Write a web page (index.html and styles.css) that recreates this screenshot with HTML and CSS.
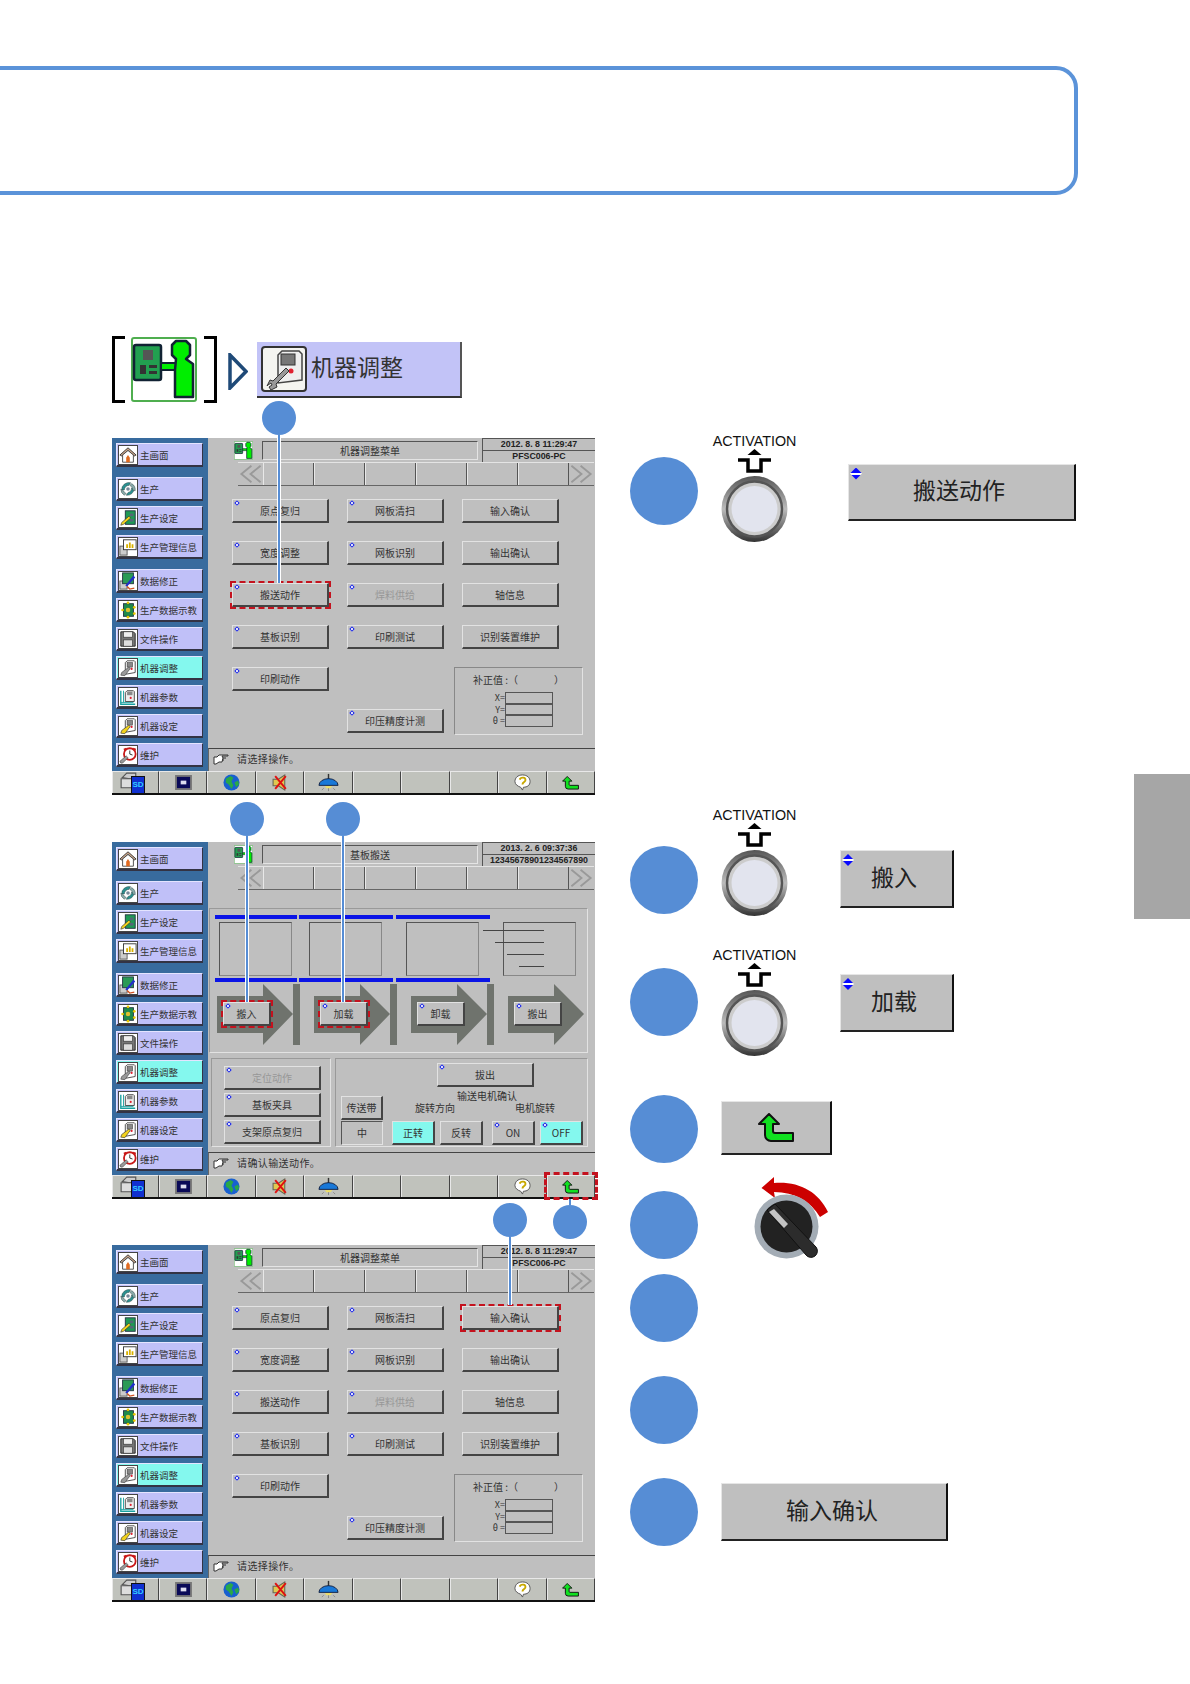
FILE: index.html
```html
<!DOCTYPE html>
<html lang="zh-CN">
<head>
    <meta charset="UTF-8">
    <title>机器调整</title>
    <link rel="stylesheet" href="styles.css">
</head>
<body>
    <!-- icon sheet -->
    <svg class="icon-sheet" width="0" height="0">
        <symbol id="i-person" viewBox="0 0 66 65">
            <rect x="1" y="1" width="64" height="63" rx="2" fill="#fff" stroke="#4fae4f" stroke-width="2"/>
            <rect x="3" y="8" width="27" height="35" rx="2" fill="#22a050" stroke="#123" stroke-width="2.5"/>
            <rect x="12" y="13" width="10" height="10" fill="#555"/>
            <rect x="9" y="28" width="6" height="9" fill="#333"/>
            <rect x="18" y="28" width="8" height="3" fill="#333"/>
            <rect x="18" y="34" width="8" height="3" fill="#333"/>
            <path d="M30 26h16v7H30z" fill="#0e0" stroke="#123" stroke-width="2"/>
            <path d="M45 4h10l4 4v10l-4 4 7 5v33H44V33l1-11-4-4V8z" fill="#0e0" stroke="#123" stroke-width="2.5" stroke-linejoin="round"/>
        </symbol>
        <symbol id="i-machine" viewBox="0 0 46 46">
            <rect x="1" y="1" width="44" height="44" rx="3" fill="#f4f4f0" stroke="#333" stroke-width="2"/>
            <path d="M17 9l4-4h17l3 3v26l-24 3z" fill="#eee" stroke="#444" stroke-width="1.5"/>
            <rect x="20" y="8" width="14" height="11" fill="#777" stroke="#333"/>
            <circle cx="30" cy="25" r="2.5" fill="#e02030"/>
            <path d="M6 40l3-6 3 1 13-13 3 3-13 13 1 3-6 3-2-3 3-2-1-2-3 2z" fill="#999" stroke="#333"/>
        </symbol>
        <symbol id="i-home" viewBox="0 0 20 20">
            <path d="M1 10l9-8 9 8-2 1-7-6-7 6z" fill="#c9a58a" stroke="#333"/>
            <path d="M4 10v8h12v-8l-6-5z" fill="#fff" stroke="#444"/>
            <path d="M8 18v-5l2-3 2 3v5z" fill="#e06a20"/>
        </symbol>
        <symbol id="i-swirl" viewBox="0 0 20 20">
            <circle cx="10" cy="10" r="2" fill="#789"/>
            <path d="M3 11a8 8 0 0 1 10-8l-2 3a5 5 0 0 0-5 5z" fill="#2a8f8f" stroke="#344" stroke-width=".5"/>
            <path d="M17 9a8 8 0 0 1-9 8l2-3a5 5 0 0 0 4-5z" fill="#2a8f8f" stroke="#344" stroke-width=".5"/>
            <path d="M14 4a8 8 0 0 1 4 8l-3-1a5 5 0 0 0-3-5z" fill="#8aa" stroke="#344" stroke-width=".5"/>
            <path d="M6 17a8 8 0 0 1-4-7l3 2a5 5 0 0 0 3 3z" fill="#8aa" stroke="#344" stroke-width=".5"/>
        </symbol>
        <symbol id="i-set" viewBox="0 0 20 20">
            <rect x="7" y="2" width="11" height="15" fill="#1f9a55" stroke="#234"/>
            <rect x="12" y="5" width="4" height="3" fill="#567"/>
            <rect x="12" y="11" width="4" height="3" fill="#567"/>
            <path d="M2 18l1-3 8-7 2 2-8 7z" fill="#f2d21c" stroke="#333" stroke-width=".7"/>
        </symbol>
        <symbol id="i-info" viewBox="0 0 20 20">
            <rect x="1" y="9" width="8" height="10" fill="#ccc" stroke="#555"/>
            <rect x="5" y="2" width="14" height="11" fill="#fff" stroke="#333"/>
            <path d="M8 11V7h2v4zM11 11V5h2v6zM14 11V7h2v4z" fill="#d8b000"/>
        </symbol>
        <symbol id="i-fix" viewBox="0 0 20 20">
            <rect x="1" y="10" width="8" height="9" fill="#ccc" stroke="#555"/>
            <rect x="4" y="1" width="12" height="12" fill="#2a9a55" stroke="#234"/>
            <path d="M7 15l9-11 2 2-9 10z" fill="#2030c8"/>
            <path d="M9 16l3 3 5-1" fill="none" stroke="#d05020" stroke-width="1.5"/>
        </symbol>
        <symbol id="i-teach" viewBox="0 0 20 20">
            <rect x="5" y="3" width="11" height="14" fill="#1f8a4a" stroke="#234"/>
            <circle cx="4" cy="10" r="1.5" fill="#e8c800"/>
            <circle cx="10" cy="2" r="1.5" fill="#e8c800"/>
            <circle cx="17" cy="7" r="1.5" fill="#e8c800"/>
            <circle cx="17" cy="14" r="1.5" fill="#e8c800"/>
            <circle cx="10" cy="18" r="1.5" fill="#e8c800"/>
            <circle cx="10" cy="10" r="2.5" fill="#dcc030"/>
        </symbol>
        <symbol id="i-disk" viewBox="0 0 20 20">
            <path d="M2 2h14l2 2v14H2z" fill="#777" stroke="#222"/>
            <rect x="5" y="2" width="10" height="6" fill="#eee" stroke="#333" stroke-width=".7"/>
            <rect x="5" y="11" width="10" height="7" fill="#ddd" stroke="#333" stroke-width=".7"/>
        </symbol>
        <symbol id="i-adjust" viewBox="0 0 20 20">
            <path d="M7 4l2-2h8l1 1v12l-11 2z" fill="#fff" stroke="#444"/>
            <rect x="9" y="4" width="6" height="5" fill="#888" stroke="#333" stroke-width=".6"/>
            <circle cx="14" cy="11" r="1.2" fill="#e02030"/>
            <path d="M2 18l1-3 8-6 1.5 1.5-6 8z" fill="#999" stroke="#444" stroke-width=".7"/>
        </symbol>
        <symbol id="i-param" viewBox="0 0 20 20">
            <path d="M2 3v15h16" fill="none" stroke="#18a0a0" stroke-width="1.5"/>
            <path d="M5 3v13M2 16h14" fill="none" stroke="#18a0a0"/>
            <path d="M7 5l2-2h7l1 1v11H7z" fill="#eee" stroke="#444"/>
            <rect x="9" y="4" width="6" height="4" fill="#888"/>
            <circle cx="13" cy="11" r="1.2" fill="#e02030"/>
        </symbol>
        <symbol id="i-mset" viewBox="0 0 20 20">
            <path d="M7 4l2-2h8l1 1v12l-11 2z" fill="#fff" stroke="#444"/>
            <rect x="9" y="4" width="6" height="5" fill="#888" stroke="#333" stroke-width=".6"/>
            <circle cx="14" cy="11" r="1.2" fill="#e02030"/>
            <path d="M2 18l1-3 8-6 1.5 1.5-6 8z" fill="#f2d21c" stroke="#333" stroke-width=".7"/>
        </symbol>
        <symbol id="i-clock" viewBox="0 0 20 20">
            <circle cx="12" cy="9" r="6.5" fill="#fff" stroke="#c81818" stroke-width="2"/>
            <path d="M12 5v4l3 1" fill="none" stroke="#222"/>
            <path d="M5 3l3-1 1 2-3 2zM19 3l-3-1-1 2 3 2z" fill="#c81818"/>
            <path d="M2 19l-1-2 7-6 2 2-6 6z" fill="#999" stroke="#444" stroke-width=".7"/>
        </symbol>
        <symbol id="i-printer" viewBox="0 0 16 16">
            <path d="M2 5l4-4h8v6z" fill="#ccc" stroke="#555"/>
            <path d="M1 6h13v8H1z" fill="#ddd" stroke="#555"/>
        </symbol>
        <symbol id="i-screen" viewBox="0 0 18 16">
            <rect x="1" y="1" width="16" height="14" fill="#0a0a58" stroke="#777" stroke-width="2"/>
            <rect x="6" y="6" width="6" height="4" fill="#dde"/>
        </symbol>
        <symbol id="i-globe" viewBox="0 0 18 18">
            <circle cx="9" cy="9" r="8.5" fill="#1860d0"/>
            <path d="M3 5l5-3 3 2-2 4 2 4-2 4-3-5-3-2zM12 9l4-2 1 4-3 3z" fill="#28a848"/>
        </symbol>
        <symbol id="i-mute" viewBox="0 0 16 16">
            <path d="M1 5h5l6-4v14l-6-4H1z" fill="#e0c850" stroke="#665"/>
            <path d="M3 2l10 12M13 2L3 14" stroke="#e01010" stroke-width="1.8"/>
        </symbol>
        <symbol id="i-lamp" viewBox="0 0 22 18">
            <path d="M11 0v6" stroke="#333" stroke-width="1.5"/>
            <path d="M1 12a10 7 0 0 1 20 0z" fill="#1878d8" stroke="#124"/>
            <path d="M7 13h8l-2 2H9z" fill="#f0e060"/>
            <path d="M6 15l-2 2M11 15v3M16 15l2 2" stroke="#888"/>
        </symbol>
        <symbol id="i-help" viewBox="0 0 18 18">
            <path d="M9 1c5 0 8 3 8 7s-3 6-7 6l-1 3-2-3c-3-1-6-3-6-6 0-4 3-7 8-7z" fill="#fff" stroke="#555"/>
            <path d="M6 6c1-3 7-3 6 1-1 2-3 2-3 4" fill="none" stroke="#c8a800" stroke-width="2"/>
        </symbol>
        <symbol id="i-back" viewBox="0 0 36 30">
            <path d="M11 1L1 11h6v11a6 6 0 0 0 6 6h22v-8H17a2 2 0 0 1-2-2v-7h6z" fill="#10e020" stroke="#111" stroke-width="2" stroke-linejoin="round"/>
        </symbol>
        <symbol id="i-hand" viewBox="0 0 16 12">
            <path d="M1 4h3l2-2h9v1H9l1 2-1 4H6L3 11H1z" fill="#fff" stroke="#333"/>
            <path d="M10 5h3M9 7h2" stroke="#333"/>
        </symbol>
        <symbol id="i-prev" viewBox="0 0 24 24">
            <path d="M13 3L2 12l11 9M23 3L12 12l11 9" fill="none" stroke="#999" stroke-width="2"/>
        </symbol>
        <symbol id="i-next" viewBox="0 0 24 24">
            <path d="M11 3l11 9-11 9M1 3l11 9-11 9" fill="none" stroke="#999" stroke-width="2"/>
        </symbol>
        <symbol id="i-flow" viewBox="0 0 84 61">
            <path d="M0 12h46V0l30 30-30 31V49H0z" fill="#6f736d"/>
            <rect x="76" width="7" height="61" fill="#6f736d"/>
        </symbol>
        <symbol id="i-press" viewBox="0 0 67 66">
            <defs>
                <linearGradient id="ring" x1="0" y1="0" x2="0" y2="1">
                    <stop offset="0" stop-color="#555"/>
                    <stop offset=".5" stop-color="#bbb"/>
                    <stop offset="1" stop-color="#333"/>
                </linearGradient>
            </defs>
            <circle cx="33.5" cy="33" r="33" fill="url(#ring)"/>
            <circle cx="33.5" cy="33" r="27.5" fill="#ccc" stroke="#555" stroke-width="2.5"/>
            <circle cx="33.5" cy="33" r="23" fill="#e2e4ee"/>
        </symbol>
        <symbol id="i-up" viewBox="0 0 35 24">
            <path d="M17.5 0l7 6h-14z" fill="#000"/>
            <path d="M1 11h10v11h13V11h10" fill="none" stroke="#000" stroke-width="3.5"/>
        </symbol>
        <symbol id="i-rotary" viewBox="0 0 77 82">
            <path d="M8.500 11L21 0v6c24-2 44 8 54 29l-8 5C57 24 42 15 21 15l1 6z" fill="#cc0000"/>
            <circle cx="33.500" cy="49.500" r="32" fill="#a3acb5"/>
            <circle cx="33.500" cy="49.500" r="26" fill="#222"/>
            <path d="M14 33l8-6 41 43a6 6 0 0 1-10 8z" fill="#2c2c2c" stroke="#111"/>
            <path d="M16 35l5-3 14 15-4 4z" fill="#c4c4c4"/>
        </symbol>
    </svg>

    <header class="title-box"></header>

    <div class="main">
        <section class="left-col">
            <div class="crumbs">
                <div class="bracket">
                    <svg class="person-icon"><use href="#i-person"/></svg>
                </div>
                <svg class="crumb-arrow" viewBox="0 0 20 37"><path d="M2 2l16 16.5L2 35z" fill="none" stroke="#1f4a78" stroke-width="3.5"/></svg>
                <div class="crumb-btn">
                    <svg class="machine-icon"><use href="#i-machine"/></svg>
                    <span>机器调整</span>
                </div>
            </div>

            <!-- panel 1 -->
            <div class="panel panel-first">
                <nav class="side">
                    <a class="side-btn"><svg><use href="#i-home"/></svg>主画面</a>
                    <a class="side-btn gap-top"><svg><use href="#i-swirl"/></svg>生产</a>
                    <a class="side-btn"><svg><use href="#i-set"/></svg>生产设定</a>
                    <a class="side-btn"><svg><use href="#i-info"/></svg>生产管理信息</a>
                    <a class="side-btn gap-top"><svg><use href="#i-fix"/></svg>数据修正</a>
                    <a class="side-btn"><svg><use href="#i-teach"/></svg>生产数据示教</a>
                    <a class="side-btn"><svg><use href="#i-disk"/></svg>文件操作</a>
                    <a class="side-btn active"><svg><use href="#i-adjust"/></svg>机器调整</a>
                    <a class="side-btn"><svg><use href="#i-param"/></svg>机器参数</a>
                    <a class="side-btn"><svg><use href="#i-mset"/></svg>机器设定</a>
                    <a class="side-btn"><svg><use href="#i-clock"/></svg>维护</a>
                </nav>
                <div class="screen">
                    <div class="head">
                        <svg class="head-icon"><use href="#i-person"/></svg>
                        <div class="head-title">机器调整菜单</div>
                        <div class="head-info"><div>2012. 8. 8 11:29:47</div><div>PFSC006-PC</div></div>
                    </div>
                    <div class="tabs">
                        <svg class="tab-arrow"><use href="#i-prev"/></svg>
                        <i></i><i></i><i></i><i></i><i></i><i></i>
                        <svg class="tab-arrow"><use href="#i-next"/></svg>
                    </div>
                    <div class="menu">
                        <button class="btn mark">原点复归</button>
                        <button class="btn mark">网板清扫</button>
                        <button class="btn">输入确认</button>
                        <button class="btn mark">宽度调整</button>
                        <button class="btn mark">网板识别</button>
                        <button class="btn">输出确认</button>
                        <button class="btn mark dashed">搬送动作</button>
                        <button class="btn mark off">焊料供给</button>
                        <button class="btn">轴信息</button>
                        <button class="btn mark">基板识别</button>
                        <button class="btn mark">印刷测试</button>
                        <button class="btn">识别装置维护</button>
                        <button class="btn mark">印刷动作</button>
                        <div class="offset-box">
                            <div class="offset-title">补正值 :（<span class="offset-blank"></span>）</div>
                            <div class="offset-row"><span>X=</span><b></b></div>
                            <div class="offset-row"><span>Y=</span><b></b></div>
                            <div class="offset-row"><span>θ =</span><b></b></div>
                        </div>
                        <button class="btn mark press-check">印压精度计测</button>
                    </div>
                    <div class="status"><svg><use href="#i-hand"/></svg>请选择操作。</div>
                </div>
                <div class="tools">
                    <span><svg class="t-sd"><use href="#i-printer"/></svg><em class="sd-tag">SD</em></span>
                    <span><svg class="t-screen"><use href="#i-screen"/></svg></span>
                    <span><svg class="t-std"><use href="#i-globe"/></svg></span>
                    <span><svg class="t-std"><use href="#i-mute"/></svg></span>
                    <span><svg class="t-lamp"><use href="#i-lamp"/></svg></span>
                    <span></span><span></span><span></span>
                    <span><svg class="t-std"><use href="#i-help"/></svg></span>
                    <span><svg class="t-back"><use href="#i-back"/></svg></span>
                </div>
                <div class="callout call-move"></div>
            </div>

            <!-- panel 2 -->
            <div class="panel panel-second">
                <nav class="side">
                    <a class="side-btn"><svg><use href="#i-home"/></svg>主画面</a>
                    <a class="side-btn gap-top"><svg><use href="#i-swirl"/></svg>生产</a>
                    <a class="side-btn"><svg><use href="#i-set"/></svg>生产设定</a>
                    <a class="side-btn"><svg><use href="#i-info"/></svg>生产管理信息</a>
                    <a class="side-btn gap-top"><svg><use href="#i-fix"/></svg>数据修正</a>
                    <a class="side-btn"><svg><use href="#i-teach"/></svg>生产数据示教</a>
                    <a class="side-btn"><svg><use href="#i-disk"/></svg>文件操作</a>
                    <a class="side-btn active"><svg><use href="#i-adjust"/></svg>机器调整</a>
                    <a class="side-btn"><svg><use href="#i-param"/></svg>机器参数</a>
                    <a class="side-btn"><svg><use href="#i-mset"/></svg>机器设定</a>
                    <a class="side-btn"><svg><use href="#i-clock"/></svg>维护</a>
                </nav>
                <div class="screen">
                    <div class="head">
                        <svg class="head-icon"><use href="#i-person"/></svg>
                        <div class="head-title">基板搬送</div>
                        <div class="head-info"><div>2013. 2. 6 09:37:36</div><div>12345678901234567890</div></div>
                    </div>
                    <div class="tabs">
                        <svg class="tab-arrow"><use href="#i-prev"/></svg>
                        <i></i><i></i><i></i><i></i><i></i><i></i>
                        <svg class="tab-arrow"><use href="#i-next"/></svg>
                    </div>
                    <div class="line-frame">
                        <div class="belts"><i></i><i></i><i></i></div>
                        <div class="boxes">
                            <div class="stage"></div>
                            <div class="stage"></div>
                            <div class="stage"></div>
                            <div class="stage stage-lines"><i></i><i></i><i></i><i></i></div>
                        </div>
                        <div class="belts"><i></i><i></i><i></i></div>
                        <div class="flows">
                            <div class="flow"><svg><use href="#i-flow"/></svg><button class="btn mark dashed">搬入</button></div>
                            <div class="flow"><svg><use href="#i-flow"/></svg><button class="btn mark dashed">加载</button></div>
                            <div class="flow"><svg><use href="#i-flow"/></svg><button class="btn mark">卸载</button></div>
                            <div class="flow flow-last"><svg><use href="#i-flow"/></svg><button class="btn mark">搬出</button></div>
                        </div>
                    </div>
                    <div class="lower">
                        <div class="lower-left">
                            <button class="btn mark off">定位动作</button>
                            <button class="btn mark">基板夹具</button>
                            <button class="btn mark">支架原点复归</button>
                        </div>
                        <div class="lower-right">
                            <button class="btn mark eject">拔出</button>
                            <div class="motor-title">输送电机确认</div>
                            <div class="motor-heads"><span>旋转方向</span><span>电机旋转</span></div>
                            <div class="motor-row">
                                <div class="belt-col">
                                    <button class="btn small">传送带</button>
                                    <div class="belt-state">中</div>
                                </div>
                                <button class="btn small on">正转</button>
                                <button class="btn small">反转</button>
                                <button class="btn small mark motor-on">ON</button>
                                <button class="btn small mark on">OFF</button>
                            </div>
                        </div>
                    </div>
                    <div class="status"><svg><use href="#i-hand"/></svg>请确认输送动作。</div>
                </div>
                <div class="tools">
                    <span><svg class="t-sd"><use href="#i-printer"/></svg><em class="sd-tag">SD</em></span>
                    <span><svg class="t-screen"><use href="#i-screen"/></svg></span>
                    <span><svg class="t-std"><use href="#i-globe"/></svg></span>
                    <span><svg class="t-std"><use href="#i-mute"/></svg></span>
                    <span><svg class="t-lamp"><use href="#i-lamp"/></svg></span>
                    <span></span><span></span><span></span>
                    <span><svg class="t-std"><use href="#i-help"/></svg></span>
                    <span class="tool-dashed"><svg class="t-back"><use href="#i-back"/></svg></span>
                </div>
                <div class="callout call-in"></div>
                <div class="callout call-load"></div>
                <div class="callout call-return"></div>
            </div>

            <!-- panel 3 -->
            <div class="panel panel-third">
                <nav class="side">
                    <a class="side-btn"><svg><use href="#i-home"/></svg>主画面</a>
                    <a class="side-btn gap-top"><svg><use href="#i-swirl"/></svg>生产</a>
                    <a class="side-btn"><svg><use href="#i-set"/></svg>生产设定</a>
                    <a class="side-btn"><svg><use href="#i-info"/></svg>生产管理信息</a>
                    <a class="side-btn gap-top"><svg><use href="#i-fix"/></svg>数据修正</a>
                    <a class="side-btn"><svg><use href="#i-teach"/></svg>生产数据示教</a>
                    <a class="side-btn"><svg><use href="#i-disk"/></svg>文件操作</a>
                    <a class="side-btn active"><svg><use href="#i-adjust"/></svg>机器调整</a>
                    <a class="side-btn"><svg><use href="#i-param"/></svg>机器参数</a>
                    <a class="side-btn"><svg><use href="#i-mset"/></svg>机器设定</a>
                    <a class="side-btn"><svg><use href="#i-clock"/></svg>维护</a>
                </nav>
                <div class="screen">
                    <div class="head">
                        <svg class="head-icon"><use href="#i-person"/></svg>
                        <div class="head-title">机器调整菜单</div>
                        <div class="head-info"><div>2012. 8. 8 11:29:47</div><div>PFSC006-PC</div></div>
                    </div>
                    <div class="tabs">
                        <svg class="tab-arrow"><use href="#i-prev"/></svg>
                        <i></i><i></i><i></i><i></i><i></i><i></i>
                        <svg class="tab-arrow"><use href="#i-next"/></svg>
                    </div>
                    <div class="menu">
                        <button class="btn mark">原点复归</button>
                        <button class="btn mark">网板清扫</button>
                        <button class="btn dashed">输入确认</button>
                        <button class="btn mark">宽度调整</button>
                        <button class="btn mark">网板识别</button>
                        <button class="btn">输出确认</button>
                        <button class="btn mark">搬送动作</button>
                        <button class="btn mark off">焊料供给</button>
                        <button class="btn">轴信息</button>
                        <button class="btn mark">基板识别</button>
                        <button class="btn mark">印刷测试</button>
                        <button class="btn">识别装置维护</button>
                        <button class="btn mark">印刷动作</button>
                        <div class="offset-box">
                            <div class="offset-title">补正值 :（<span class="offset-blank"></span>）</div>
                            <div class="offset-row"><span>X=</span><b></b></div>
                            <div class="offset-row"><span>Y=</span><b></b></div>
                            <div class="offset-row"><span>θ =</span><b></b></div>
                        </div>
                        <button class="btn mark press-check">印压精度计测</button>
                    </div>
                    <div class="status"><svg><use href="#i-hand"/></svg>请选择操作。</div>
                </div>
                <div class="tools">
                    <span><svg class="t-sd"><use href="#i-printer"/></svg><em class="sd-tag">SD</em></span>
                    <span><svg class="t-screen"><use href="#i-screen"/></svg></span>
                    <span><svg class="t-std"><use href="#i-globe"/></svg></span>
                    <span><svg class="t-std"><use href="#i-mute"/></svg></span>
                    <span><svg class="t-lamp"><use href="#i-lamp"/></svg></span>
                    <span></span><span></span><span></span>
                    <span><svg class="t-std"><use href="#i-help"/></svg></span>
                    <span><svg class="t-back"><use href="#i-back"/></svg></span>
                </div>
                <div class="callout call-check"></div>
            </div>
        </section>

        <section class="right-col">
            <div class="step">
                <div class="dot"></div>
                <div class="activation act-first">
                    <span>ACTIVATION</span>
                    <svg class="act-up"><use href="#i-up"/></svg>
                    <svg class="act-press"><use href="#i-press"/></svg>
                </div>
                <div class="key key-wide mark-big">搬送动作</div>
            </div>
            <div class="step step-2">
                <div class="dot"></div>
                <div class="activation act-high">
                    <span>ACTIVATION</span>
                    <svg class="act-up"><use href="#i-up"/></svg>
                    <svg class="act-press"><use href="#i-press"/></svg>
                </div>
                <div class="key key-short key-in mark-big">搬入</div>
            </div>
            <div class="step step-3">
                <div class="dot"></div>
                <div class="activation">
                    <span>ACTIVATION</span>
                    <svg class="act-up"><use href="#i-up"/></svg>
                    <svg class="act-press"><use href="#i-press"/></svg>
                </div>
                <div class="key key-short key-load mark-big">加载</div>
            </div>
            <div class="step step-4">
                <div class="dot"></div>
                <div class="key key-back"><svg><use href="#i-back"/></svg></div>
            </div>
            <div class="step step-5">
                <div class="dot"></div>
                <svg class="rotary"><use href="#i-rotary"/></svg>
            </div>
            <div class="step step-6"><div class="dot"></div></div>
            <div class="step step-7"><div class="dot"></div></div>
            <div class="step step-7">
                <div class="dot"></div>
                <div class="key key-long">输入确认</div>
            </div>
        </section>

        <aside class="page-tab"></aside>
    </div>
</body>
</html>
```

FILE: styles.css
```css
body {
    margin: 0;
    width: 1190px;
    height: 1684px;
    overflow: hidden;
    background-color: #fff;
    font-family: "Liberation Sans", "Noto Sans CJK SC", sans-serif;
    color: #333;
}

.icon-sheet {
    position: absolute;
}

.title-box {
    width: 1090px;
    height: 121px;
    margin: 66px 0 0 -20px;
    border: 4px solid #5b93d9;
    border-radius: 22px;
}

.main {
    display: flex;
    margin-top: 141px;
}

.left-col {
    width: 483px;
    margin-left: 112px;
    flex-shrink: 0;
}

/* breadcrumb row */
.crumbs {
    display: flex;
    align-items: center;
    height: 67px;
    margin-bottom: 35px;
}

.bracket {
    display: flex;
    align-items: center;
    width: 105px;
    height: 67px;
    box-sizing: border-box;
    padding-left: 16px;
    border: 3px solid #000;
    border-image: linear-gradient(to right, #000 13px, transparent 13px, transparent 92px, #000 92px) 3;
}

.person-icon {
    width: 66px;
    height: 65px;
}

.crumb-arrow {
    width: 20px;
    height: 37px;
    margin: 4px 0 0 11px;
}

.crumb-btn {
    display: flex;
    align-items: center;
    gap: 4px;
    width: 205px;
    height: 56px;
    box-sizing: border-box;
    margin-left: 9px;
    padding-left: 4px;
    background-color: #c2c3f7;
    border-right: 2px solid #555;
    border-bottom: 2px solid #333;
    font-family: "Noto Sans CJK SC", sans-serif;
    font-size: 23px;
}

.crumb-btn span {
    margin-bottom: 5px;
}

.machine-icon {
    width: 46px;
    height: 46px;
}

/* machine screen */
.panel {
    position: relative;
    display: grid;
    grid-template-columns: 96px 387px;
    grid-template-rows: 333px 24px;
    width: 483px;
    height: 357px;
    margin-bottom: 47px;
    font-family: "Noto Sans CJK SC", sans-serif;
    font-size: 10px;
    background-color: #bfbfbf;
}

.panel-second {
    margin-bottom: 46px;
}

.side {
    display: flex;
    flex-direction: column;
    gap: 5px;
    padding: 5px 0 0 4px;
    background-color: #386b9e;
}

.side-btn {
    display: flex;
    align-items: center;
    gap: 2px;
    width: 87px;
    height: 24px;
    box-sizing: border-box;
    padding-left: 1px;
    background-color: #c0c0f8;
    border-top: 1px solid #e4e4ff;
    border-left: 1px solid #e4e4ff;
    border-right: 1px solid #334;
    border-bottom: 2px solid #334;
    font-size: 9.5px;
    white-space: nowrap;
}

.side-btn svg {
    width: 18px;
    height: 18px;
    flex-shrink: 0;
    background-color: #fff;
    border: 1px solid #444;
}

.side-btn.gap-top {
    margin-top: 5px;
}

.side-btn.active {
    background-color: #84f8ee;
}

.screen {
    display: flex;
    flex-direction: column;
    min-width: 0;
}

.head {
    display: flex;
    align-items: center;
    height: 24px;
    padding-left: 26px;
}

.head-icon {
    width: 19px;
    height: 19px;
    margin-right: 9px;
    flex-shrink: 0;
}

.head-title {
    width: 216px;
    height: 19px;
    box-sizing: border-box;
    border: 1px solid #555;
    border-right-color: #e4e4e4;
    border-bottom-color: #e4e4e4;
    text-align: center;
    line-height: 17px;
    flex-shrink: 0;
}

.head-info {
    width: 113px;
    margin-left: 4px;
    font-family: "Liberation Sans", sans-serif;
    font-size: 8.8px;
    font-weight: 700;
    text-align: center;
    color: #222;
}

.head-info div {
    height: 11px;
    line-height: 11px;
    border-top: 1px solid #555;
    border-left: 1px solid #555;
}

.tabs {
    display: flex;
    height: 24px;
    margin-left: 30px;
    width: 356px;
    box-sizing: border-box;
    border-top: 1px solid #e4e4e4;
    border-bottom: 1px solid #666;
}

.tabs i {
    width: 51px;
    border-left: 1px solid #e8e8e8;
    border-right: 1px solid #555;
    box-sizing: border-box;
}

.tab-arrow {
    width: 25px;
    height: 22px;
    flex-shrink: 0;
}

.menu {
    display: grid;
    grid-template-columns: 97px 97px 97px;
    grid-auto-rows: 24px;
    column-gap: 18px;
    row-gap: 18px;
    padding: 13px 0 0 24px;
    flex: 1;
}

.btn {
    position: relative;
    width: 100%;
    height: 24px;
    padding: 0;
    box-sizing: border-box;
    background-color: #bfbfbf;
    border-style: solid;
    border-width: 1px 2px 2px 1px;
    border-color: #e2e2e2 #444 #444 #e2e2e2;
    font: inherit;
    color: #333;
    white-space: nowrap;
}

.btn.mark::before {
    content: "";
    position: absolute;
    top: 1px;
    left: 2px;
    width: 2px;
    height: 2px;
    background-color: #fff;
    border: 1px solid #1420e0;
    transform: rotate(45deg);
}

.btn.off {
    color: #979797;
}

.btn.on {
    background-color: #84f8ee;
}

.btn.dashed {
    outline: 2px dashed #c4121e;
    outline-offset: 0;
}

.press-check {
    grid-column: 2;
    grid-row: 6;
}

.offset-box {
    grid-column: 3;
    grid-row: 5 / span 2;
    width: 129px;
    height: 68px;
    margin-left: -8px;
    box-sizing: border-box;
    border: 1px solid #e2e2e2;
    border-top-color: #888;
    border-left-color: #888;
    padding: 5px 0 0 0;
}

.offset-title {
    display: flex;
    justify-content: center;
    line-height: 14px;
}

.offset-blank {
    width: 36px;
}

.offset-row {
    display: flex;
    align-items: center;
    height: 11.5px;
    padding-left: 30px;
    font-size: 9px;
}

.offset-row:nth-child(2) {
    margin-top: 5px;
}

.offset-row span {
    width: 20px;
    text-align: right;
}

.offset-row b {
    width: 48px;
    height: 11.5px;
    box-sizing: border-box;
    border: 1px solid #555;
}

.status {
    display: flex;
    align-items: center;
    gap: 8px;
    height: 23px;
    box-sizing: border-box;
    margin-top: auto;
    padding: 0 0 3px 4px;
    border-top: 1px solid #444;
    border-left: 1px solid #666;
    flex-shrink: 0;
    letter-spacing: .4px;
}

.status svg {
    width: 16px;
    height: 12px;
}

/* transport screen */
.line-frame {
    position: relative;
    width: 379px;
    height: 145px;
    box-sizing: border-box;
    margin: 18px 0 0 1px;
    padding: 6px 0 0 5px;
    border: 1px solid #e2e2e2;
    border-top-color: #999;
    border-left-color: #999;
}

.belts {
    display: flex;
    gap: 3px;
    height: 4px;
}

.belts i {
    width: 94px;
    background-color: #0a14e6;
}

.belts i:first-child {
    width: 82px;
    margin-right: -1px;
}

.boxes {
    display: grid;
    grid-template-columns: 90px 97px 97px 97px;
    height: 54px;
    margin: 3px 0 2px;
    padding-left: 4px;
}

.stage {
    width: 73px;
    height: 54px;
    box-sizing: border-box;
    border: 1px solid #555;
    border-right-color: #888;
    border-bottom-color: #888;
}

.stage-lines {
    display: flex;
    flex-direction: column;
    align-items: flex-end;
    gap: 11px;
    padding: 7px 31px 0 0;
}

.stage-lines i {
    height: 1px;
    flex-shrink: 0;
    background-color: #444;
}

.stage-lines i:nth-child(1) { width: 61px; }
.stage-lines i:nth-child(2) { width: 49px; }
.stage-lines i:nth-child(3) { width: 37px; }
.stage-lines i:nth-child(4) { width: 25px; }

.flows {
    display: flex;
    margin: 2px 0 0 2px;
}

.flow {
    position: relative;
    width: 97px;
    height: 61px;
    flex-shrink: 0;
    padding: 18px 0 0 6px;
    box-sizing: border-box;
}

.flow svg {
    position: absolute;
    left: 0;
    top: 0;
    width: 84px;
    height: 61px;
}

.flow-last svg {
    clip-path: inset(0 8px 0 0);
}

.flow .btn {
    width: 48px;
}

.lower {
    display: flex;
    gap: 4px;
    margin: 5px 0 0 3px;
}

.lower-left {
    display: flex;
    flex-direction: column;
    gap: 3px;
    width: 120px;
    height: 89px;
    box-sizing: border-box;
    padding: 7px 0 0 12px;
    border: 1px solid #e2e2e2;
    border-top-color: #999;
    border-left-color: #999;
}

.lower-left .btn {
    width: 97px;
}

.lower-right {
    display: flex;
    flex-direction: column;
    align-items: flex-start;
    width: 253px;
    height: 89px;
    box-sizing: border-box;
    padding: 4px 0 0;
    border: 1px solid #e2e2e2;
    border-top-color: #999;
    border-left-color: #999;
}

.eject {
    width: 97px;
    margin-left: 101px;
    flex-shrink: 0;
}

.motor-title {
    height: 12px;
    line-height: 12px;
    margin: 3px 0 0 121px;
}

.motor-heads {
    display: flex;
    gap: 60px;
    height: 12px;
    line-height: 12px;
    margin-left: 79px;
}

.motor-row {
    display: flex;
    align-items: flex-end;
    gap: 5px;
    margin: -18px 0 0 5px;
}

.btn.small {
    width: 43px;
    flex-shrink: 0;
}

.btn.motor-on {
    margin-left: 4px;
}

.belt-col {
    display: flex;
    flex-direction: column;
    width: 42px;
    margin-right: 4px;
}

.belt-col .btn.small {
    width: 42px;
}

.belt-state {
    height: 24px;
    margin-top: 1px;
    line-height: 22px;
    box-sizing: border-box;
    border: 1px solid #e2e2e2;
    border-top-color: #555;
    border-left-color: #555;
    text-align: center;
}

.tools {
    grid-column: 1 / span 2;
    display: flex;
    background-color: #c0c2bc;
    border-bottom: 2px solid #111;
    box-sizing: border-box;
}

.tools span {
    position: relative;
    display: flex;
    align-items: center;
    justify-content: center;
    flex: 1;
    box-sizing: border-box;
    border-top: 1px solid #e8e8e8;
    border-left: 1px solid #e8e8e8;
    border-right: 1px solid #444;
}

.tools span:nth-child(1) {
    flex: 0 0 47px;
}

.tool-dashed {
    outline: 3px dashed #c4121e;
    outline-offset: 0;
}

.t-sd { width: 18px; height: 18px; margin: -4px 0 0 -6px; }
.t-screen { width: 17px; height: 15px; }
.t-std { width: 17px; height: 17px; }
.t-lamp { width: 21px; height: 19px; }
.t-back { width: 17px; height: 14px; }

.sd-tag {
    width: 12px;
    height: 16px;
    margin: 4px 0 0 -7px;
    background-color: #1030d0;
    border: 1px solid #111;
    font: 700 8px/16px "Liberation Sans", sans-serif;
    color: #3cf;
    text-align: center;
    box-sizing: content-box;
}

/* numbered callouts */
.callout {
    position: absolute;
    width: 34px;
    height: 34px;
    border-radius: 50%;
    background-color: #568dd5;
}

.callout::after {
    content: "";
    position: absolute;
    left: 16px;
    width: 2px;
    background-color: #568dd5;
    box-shadow: -1px 0 0 #fff, 1px 0 0 #fff;
}

.call-move { left: 150px; top: -37px; }
.call-move::after { top: 34px; height: 148px; }
.call-in { left: 118px; top: -40px; }
.call-in::after { top: 34px; height: 166px; }
.call-load { left: 214px; top: -40px; }
.call-load::after { top: 34px; height: 166px; }
.call-return { left: 441px; top: 363px; }
.call-return::after { bottom: 34px; height: 6px; }
.call-check { left: 381px; top: -42px; }
.call-check::after { top: 34px; height: 68px; }

/* right column */
.right-col {
    width: 460px;
    margin-left: 35px;
    padding-top: 121px;
    flex-shrink: 0;
}

.step {
    display: flex;
    align-items: center;
    height: 68px;
}

.step-2 { margin-top: 321px; }
.step-3 { margin-top: 54px; }
.step-4 { margin-top: 59px; }
.step-5 { margin-top: 28px; }
.step-6 { margin-top: 15px; }
.step-7 { margin-top: 34px; }

.dot {
    width: 68px;
    height: 68px;
    border-radius: 50%;
    background-color: #568dd5;
    flex-shrink: 0;
    margin-right: 23px;
}

.activation {
    display: flex;
    flex-direction: column;
    align-items: center;
    width: 67px;
    flex-shrink: 0;
}

.activation span {
    font-size: 14.3px;
    line-height: 15px;
    color: #111;
    white-space: nowrap;
}

.act-first {
    margin-bottom: 6px;
}

.act-high {
    margin-bottom: 36px;
}

.act-up {
    width: 35px;
    height: 24px;
    margin-bottom: 3px;
}

.act-press {
    width: 67px;
    height: 66px;
}

.key {
    position: relative;
    display: flex;
    align-items: center;
    justify-content: center;
    box-sizing: border-box;
    padding-bottom: 5px;
    background-color: #bfbfbf;
    border-style: solid;
    border-width: 1px 2px 2px 1px;
    border-color: #e6e6e6 #111 #222 #e6e6e6;
    font-family: "Noto Sans CJK SC", sans-serif;
    font-size: 23px;
    color: #222;
}

.key.mark-big {
    padding-right: 5px;
}

.key.mark-big::before {
    content: "";
    position: absolute;
    top: 3px;
    left: 1px;
    width: 12px;
    height: 12px;
    clip-path: polygon(50% 0, 100% 50%, 50% 100%, 0 50%);
    background: linear-gradient(to bottom, #0a0aff 42%, #fff 42%, #fff 58%, #0a0aff 58%);
}

.key-wide {
    width: 228px;
    height: 57px;
    margin: 2px 0 0 60px;
}

.key-short {
    width: 114px;
    height: 58px;
    margin-left: 52px;
}

.key-in {
    margin-bottom: 2px;
}

.key-load {
    margin-top: 2px;
}

.key-back {
    width: 111px;
    height: 54px;
    margin-bottom: 2px;
    padding-bottom: 0;
}

.key-back svg {
    width: 36px;
    height: 30px;
}

.key-long {
    width: 227px;
    height: 58px;
    padding-right: 4px;
}

.rotary {
    width: 77px;
    height: 82px;
    margin: 0 0 14px 32px;
}

.page-tab {
    width: 56px;
    height: 145px;
    margin: 438px 0 0 auto;
    background-color: #a6a6a6;
    flex-shrink: 0;
}
```
